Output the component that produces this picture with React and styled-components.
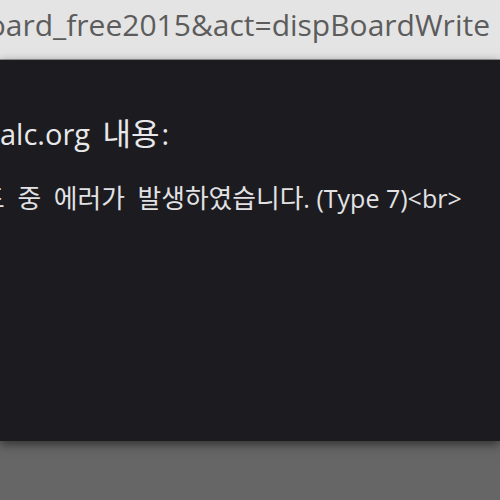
import styled, { createGlobalStyle } from 'styled-components'

const GlobalStyle = createGlobalStyle`
  html, body {
    margin: 0;
    padding: 0;
    background: #666666;
    overflow: hidden;
  }
`

const Page = styled.div`
  width: 500px;
  height: 500px;
  display: flex;
  flex-direction: column;
  overflow: hidden;
  font-family: 'Open Sans', 'Noto Sans CJK KR', sans-serif;
`

const UrlBar = styled.div`
  height: 59px;
  flex-shrink: 0;
  display: flex;
  align-items: center;
  justify-content: flex-end;
  padding-right: 10px;
  background: #e4e4e4;
  border-bottom: 1px solid #9a9a9a;
  overflow: hidden;
`

const UrlText = styled.span`
  white-space: nowrap;
  font-size: 30px;
  color: #5c5c5c;
  margin-top: -11px;
`

const Dialog = styled.div`
  height: 381px;
  flex-shrink: 0;
  background: #1c1b20;
  box-shadow: 0 3px 10px rgba(0, 0, 0, 0.55);
  position: relative;
  z-index: 1;
  display: flex;
  flex-direction: column;
  overflow: hidden;
`

const Title = styled.div`
  margin-top: 55px;
  white-space: nowrap;
  font-size: 29px;
  color: #e8e8ea;
  line-height: 36px;
  word-spacing: 5px;
`

const Message = styled.div`
  margin-top: 31px;
  margin-left: -19px;
  white-space: nowrap;
  font-size: 25px;
  color: #e2e2e4;
  line-height: 30px;
`

// Hangul runs sit a little larger than the Latin text, as in the dialog font
const Ko = styled.span`
  font-size: ${({ $scale }) => $scale}em;
  word-spacing: ${({ $gap }) => $gap}px;
  margin-right: ${({ $after = 0 }) => $after}px;
`

const Backdrop = styled.div`
  flex: 1;
  background: #666666;
`

export default function App() {
  return (
    <>
      <GlobalStyle />
      <Page>
        <UrlBar>
          <UrlText>mid=board_free2015&amp;act=dispBoardWrite</UrlText>
        </UrlBar>
        <Dialog>
          <Title>
            alc.org <Ko $scale={1.07} $gap={0} $after={2}>내용</Ko>:
          </Title>
          <Message>
            <Ko $scale={1.03} $gap={6}>드 중 에러가 발생하였습니다</Ko>. (Type 7)&lt;br&gt;
          </Message>
        </Dialog>
        <Backdrop />
      </Page>
    </>
  )
}
